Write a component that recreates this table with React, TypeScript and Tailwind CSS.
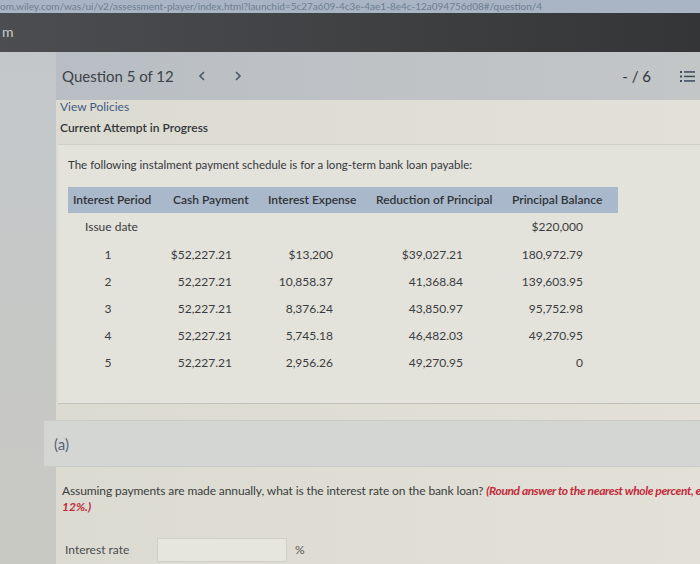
import React from "react";

const rows = [
  { n: "1", cash: "$52,227.21", exp: "$13,200", red: "$39,027.21", bal: "180,972.79" },
  { n: "2", cash: "52,227.21", exp: "10,858.37", red: "41,368.84", bal: "139,603.95" },
  { n: "3", cash: "52,227.21", exp: "8,376.24", red: "43,850.97", bal: "95,752.98" },
  { n: "4", cash: "52,227.21", exp: "5,745.18", red: "46,482.03", bal: "49,270.95" },
  { n: "5", cash: "52,227.21", exp: "2,956.26", red: "49,270.95", bal: "0" },
];

function ListIcon() {
  return (
    <svg width="15" height="13" viewBox="0 0 15 13" className="text-[#3c4a5c]">
      <rect x="0" y="1" width="2" height="2" fill="currentColor" />
      <rect x="0" y="5.5" width="2" height="2" fill="currentColor" />
      <rect x="0" y="10" width="2" height="2" fill="currentColor" />
      <rect x="4" y="1.2" width="11" height="1.5" fill="currentColor" />
      <rect x="4" y="5.7" width="11" height="1.5" fill="currentColor" />
      <rect x="4" y="10.2" width="11" height="1.5" fill="currentColor" />
    </svg>
  );
}

function Chevron({ dir }: { dir: "left" | "right" }) {
  return (
    <svg width="8" height="10" viewBox="0 0 8 10" className="text-[#4a5666]">
      <path
        d={dir === "left" ? "M6 1 L2 5 L6 9" : "M2 1 L6 5 L2 9"}
        fill="none"
        stroke="currentColor"
        strokeWidth="1.6"
      />
    </svg>
  );
}

export default function App() {
  return (
    <div className="w-[700px] h-[564px] overflow-hidden bg-[#c6c8c5] font-['Lato','Liberation_Sans',sans-serif] text-[#3a3d41]">
      {/* address bar */}
      <div className="h-[13px] bg-[#a9b5c4] text-[10px] leading-[13px] text-[#6e7d92] whitespace-nowrap overflow-hidden">
        om.wiley.com/was/ui/v2/assessment-player/index.html?launchid=5c27a609-4c3e-4ae1-8e4c-12a094756d08#/question/4
      </div>

      {/* dark top bar */}
      <div className="h-[39px] bg-gradient-to-r from-[#4b4d50] via-[#3f4143] to-[#343536] flex items-center">
        <span className="text-[14px] leading-[16px] text-[#c9cbcd] pl-[2px] -mt-[2px]">m</span>
      </div>

      <div className="flex">
        {/* left strip */}
        <div className="w-[56px] shrink-0 bg-gradient-to-b from-[#c3c7ca] to-[#c9c9c3]" />

        <div className="flex-1 min-w-0 flex flex-col">
          {/* question header */}
          <div className="h-[48px] bg-gradient-to-r from-[#b9bec4] to-[#c3c6c7] flex items-center pl-[6px] pr-[5px]">
            <span className="text-[15px] leading-[18px] text-[#3c4248]">Question 5 of 12</span>
            <span className="ml-[24px] flex items-center">
              <Chevron dir="left" />
            </span>
            <span className="ml-[28px] flex items-center">
              <Chevron dir="right" />
            </span>
            <span className="ml-auto text-[15px] leading-[18px] text-[#2f3438] mr-[29px]">- / 6</span>
            <ListIcon />
          </div>

          {/* beige content */}
          <div className="bg-gradient-to-r from-[#dcdbd1] to-[#e2e0d7] flex flex-col">
            <div className="pl-[4px] text-[12px] leading-[14px] text-[#3d5a86]">View Policies</div>
            <div className="pl-[4px] pt-[7px] text-[12px] leading-[14px] font-semibold text-[#33373b]">
              Current Attempt in Progress
            </div>

            {/* card */}
            <div className="mt-[9px] ml-[2px] bg-[#e3e2db] border-t border-[#cfcfca] border-b border-b-[#c2c2bc] pb-[27px]">
              <div className="pl-[10px] pt-[12px] text-[11.5px] leading-[16px] text-[#36393c]">
                The following instalment payment schedule is for a long-term bank loan payable:
              </div>

              <div className="ml-[10px] mt-[14px] w-[550px] text-[12px] leading-[16px]">
                <div className="grid grid-cols-[100px_95px_108px_136px_111px] h-[26px] items-center bg-[#a9b8ca] font-semibold text-[#2f3338]">
                  <div className="pl-[5px]">Interest Period</div>
                  <div className="pl-[5px]">Cash Payment</div>
                  <div className="pl-[5px]">Interest Expense</div>
                  <div className="pl-[5px]">Reduction of Principal</div>
                  <div className="pl-[5px]">Principal Balance</div>
                </div>

                <div className="grid grid-cols-[100px_95px_108px_136px_111px] h-[28px] items-center text-[#3a3d40]">
                  <div className="pl-[17px]">Issue date</div>
                  <div />
                  <div />
                  <div />
                  <div className="text-right pr-[35px]">$220,000</div>
                </div>

                {rows.map((r) => (
                  <div
                    key={r.n}
                    className="grid grid-cols-[100px_95px_108px_136px_111px] h-[27px] items-center text-[#3a3d40]"
                  >
                    <div className="text-center pr-[20px]">{r.n}</div>
                    <div className="text-right pr-[31px]">{r.cash}</div>
                    <div className="text-right pr-[38px]">{r.exp}</div>
                    <div className="text-right pr-[44px]">{r.red}</div>
                    <div className="text-right pr-[35px]">{r.bal}</div>
                  </div>
                ))}
              </div>
            </div>

            {/* (a) band */}
            <div className="mt-[16px] -ml-[12px] h-[47px] bg-[#d4d6d3] border-y border-[#c8cac6] flex items-center pl-[10px]">
              <span className="text-[15px] leading-[18px] text-[#56657a]">(a)</span>
            </div>

            {/* question */}
            <div className="pl-[6px] pt-[16px] text-[12px] leading-[16px] whitespace-nowrap overflow-hidden">
              <div className="tracking-[-0.1px]">
                Assuming payments are made annually, what is the interest rate on the bank loan?{" "}
                <span className="font-bold italic text-[#c22a3a] tracking-[-0.4px]">
                  (Round answer to the nearest whole percent, e.g.
                </span>
              </div>
              <div className="font-bold italic text-[#c22a3a]">12%.)</div>
            </div>

            <div className="flex items-center pl-[9px] pt-[23px] pb-[10px] text-[12px] leading-[16px]">
              <span className="w-[92px] text-[#4a4d50]">Interest rate</span>
              <div className="w-[130px] h-[24px] border border-[#cfcfc8] bg-[#e6e5de]" />
              <span className="ml-[8px] text-[#555]">%</span>
            </div>
          </div>
        </div>
      </div>
    </div>
  );
}
